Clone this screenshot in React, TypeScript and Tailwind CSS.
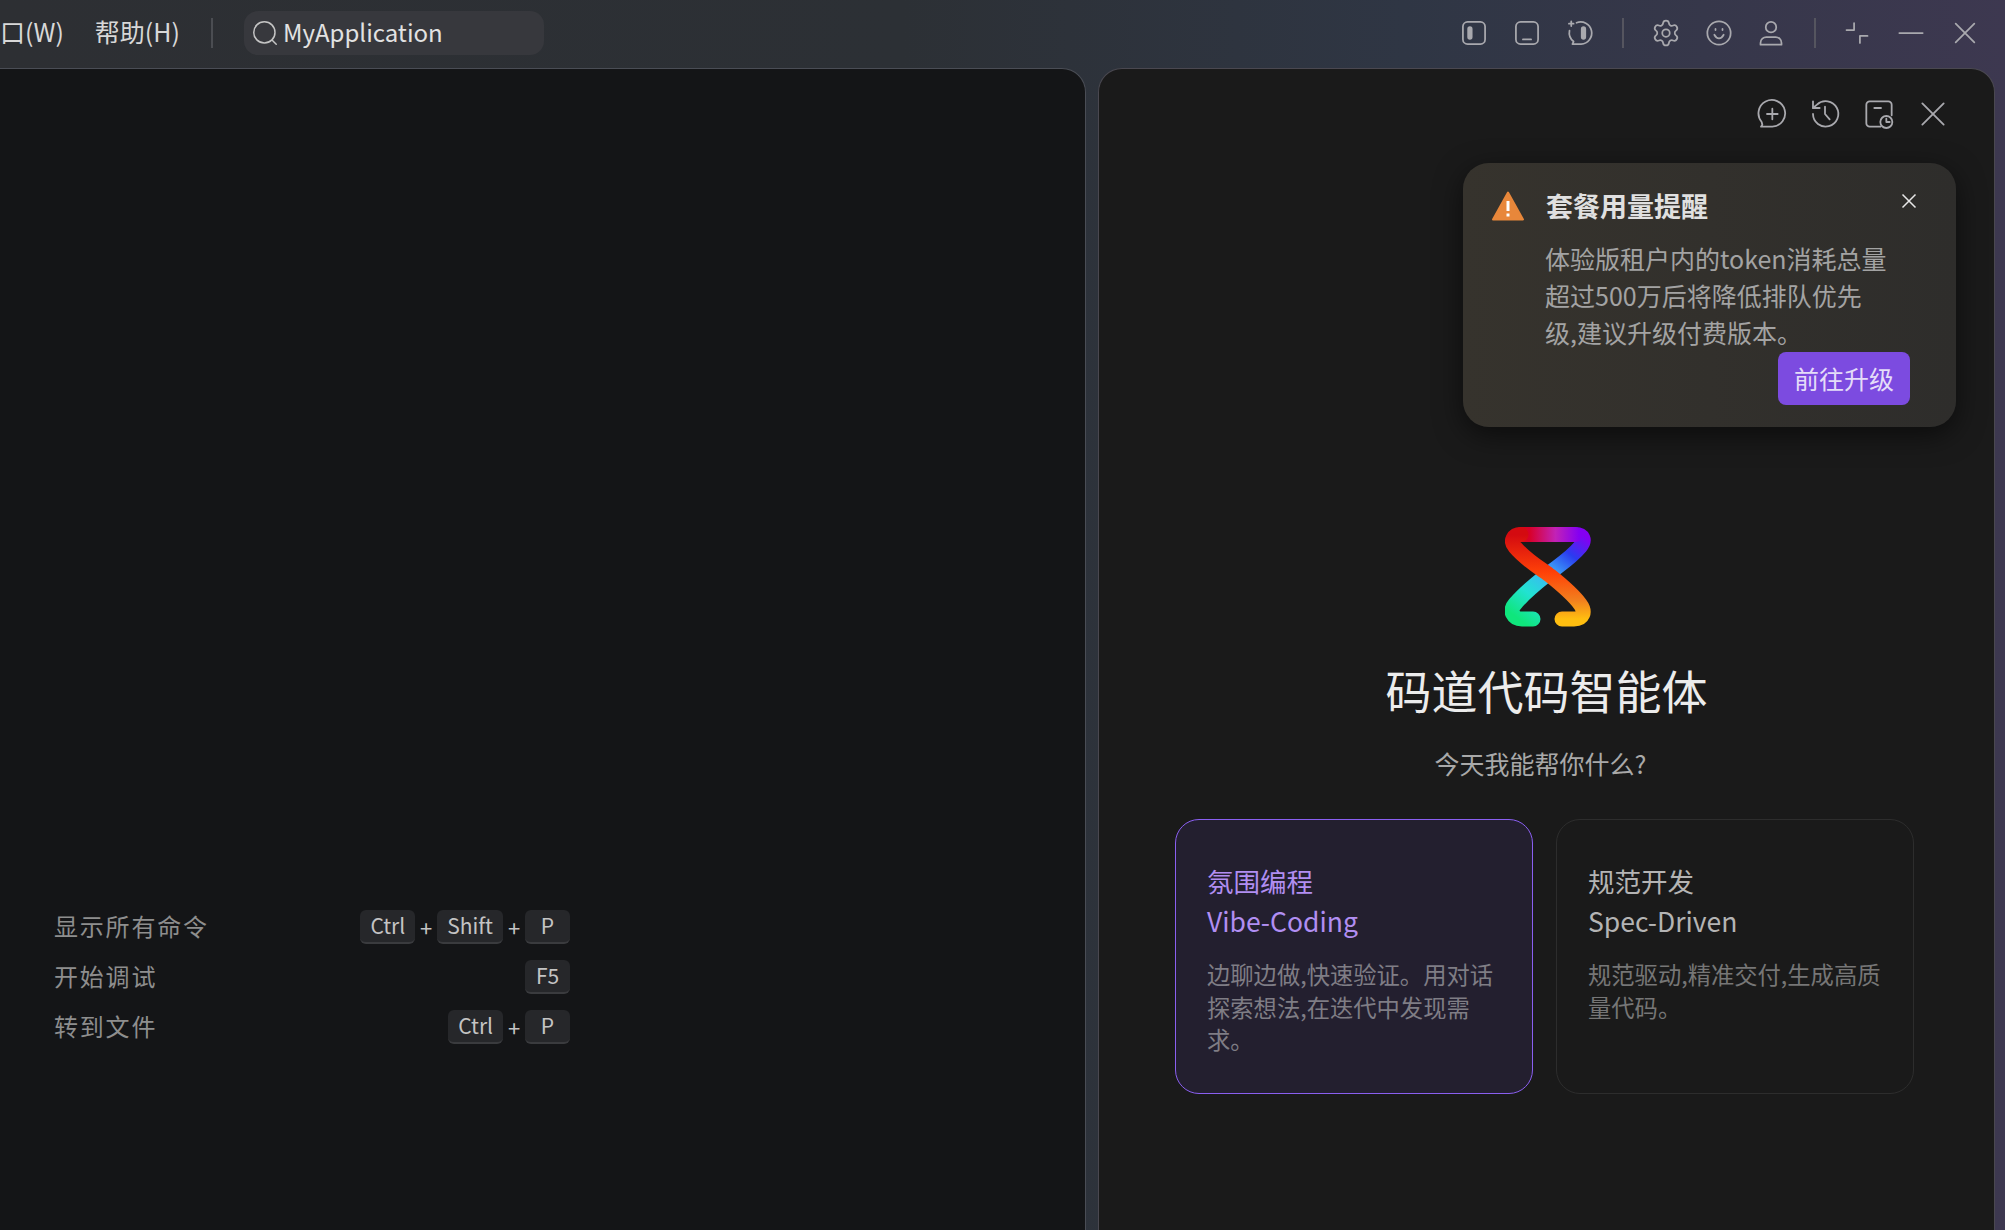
import type { ReactNode } from "react";
import { Settings } from "lucide-react";

const stroke = "#a9a9ae";

function Ico({ size = 28, children, color = stroke, sw = 1.5 }: { size?: number; children: ReactNode; color?: string; sw?: number }) {
  return (
    <svg width={size} height={size} viewBox="0 0 24 24" fill="none" stroke={color} strokeWidth={sw} strokeLinecap="round" strokeLinejoin="round" className="shrink-0">
      {children}
    </svg>
  );
}

function Logo() {
  return (
    <svg width="86" height="100" viewBox="0 0 86 100" fill="none" strokeWidth="15" strokeLinecap="round" strokeLinejoin="round" className="ml-[2px]">
      <defs>
        <linearGradient id="riseGrad" gradientUnits="userSpaceOnUse" x1="14" y1="92" x2="78" y2="8">
          <stop offset="0" stopColor="#0fe67c" />
          <stop offset="0.25" stopColor="#22e2d2" />
          <stop offset="0.52" stopColor="#3fb2f8" />
          <stop offset="0.78" stopColor="#2a3cf0" />
          <stop offset="1" stopColor="#8400f2" />
        </linearGradient>
        <linearGradient id="topGrad" gradientUnits="userSpaceOnUse" x1="74" y1="0" x2="12" y2="0">
          <stop offset="0" stopColor="#8400f2" />
          <stop offset="0.38" stopColor="#c222b6" />
          <stop offset="0.8" stopColor="#d80028" />
          <stop offset="1" stopColor="#d40a10" />
        </linearGradient>
        <linearGradient id="fallGrad" gradientUnits="userSpaceOnUse" x1="0" y1="8" x2="0" y2="92">
          <stop offset="0" stopColor="#d40a10" />
          <stop offset="0.45" stopColor="#ff4208" />
          <stop offset="0.78" stopColor="#f2801e" />
          <stop offset="1" stopColor="#ffbe10" />
        </linearGradient>
      </defs>
      <path d="M28 92H17C8 92 4 84 10 77C20 65 33 55 43 47C53 39 66 31 75 20C81 13 78 7.5 70 7.5" stroke="url(#riseGrad)" />
      <path d="M70 7.5H16" stroke="url(#topGrad)" />
      <path d="M16 7.5C8 7.5 5 14 10 20C20 32 33 40 43 47C53 55 66 65 75 77C81 85 78 92 69 92H57" stroke="url(#fallGrad)" />
    </svg>
  );
}

function Key({ children }: { children: ReactNode }) {
  return (
    <span className="flex h-[34px] min-w-[45px] items-center justify-center rounded-[6px] border-b-2 border-[#3a3b3e] bg-[#26272a] px-[10px] text-[21px] text-[#c4c4c4]">
      {children}
    </span>
  );
}

const Plus = () => <span className="w-[22px] text-center text-[22px] text-[#c4c4c4]">+</span>;

function ShortcutRow({ label, keys }: { label: string; keys: string[] }) {
  return (
    <div className="flex h-[50px] items-center justify-between">
      <span className="pb-[2px] text-[24px] tracking-[1.8px] text-[#8e8e8e]">{label}</span>
      <div className="flex items-center">
        {keys.map((k, i) => (
          <span key={k} className="flex items-center">
            {i > 0 && <Plus />}
            <Key>{k}</Key>
          </span>
        ))}
      </div>
    </div>
  );
}

function ModeCard({ active, title, sub, desc }: { active?: boolean; title: string; sub: string; desc: string }) {
  return (
    <div className={active ? "h-[275px] w-[358px] rounded-[24px] border-[1.5px] border-[#8a5ff0] bg-[#231f2f] px-[31px] pt-[41px]" : "h-[275px] w-[358px] rounded-[24px] border-[1.5px] border-[#2d2d2d] px-[31px] pt-[41px]"}>
      <div className={active ? "text-[26.5px] leading-[40px] text-[#b18ef2]" : "text-[26.5px] leading-[40px] text-[#b4b4b4]"}>
        <div>{title}</div>
        <div>{sub}</div>
      </div>
      <p className={active ? "mt-[17px] text-[23.3px] leading-[32.5px] text-[#7f7d85]" : "mt-[17px] text-[23.3px] leading-[32.5px] text-[#767676]"}>{desc}</p>
    </div>
  );
}

export default function App() {
  return (
    <div className="flex h-[1230px] w-[2005px] flex-col overflow-hidden bg-[linear-gradient(90deg,#2d2f33_0%,#2c3035_45%,#2f3644_70%,#3d3850_100%)] font-['Noto_Sans_CJK_SC','Noto_Sans',sans-serif]">
      {/* title bar */}
      <header className="flex h-[68px] shrink-0 items-center pb-[2px] pr-[26px]">
        <div className="flex items-center gap-[31px] pb-[3px] text-[25px] text-[#d8d8d8]">
          <span>口(W)</span>
          <span>帮助(H)</span>
        </div>
        <div className="ml-[31px] h-[30px] w-[2px] bg-[#4b4d52]" />
        <div className="ml-[31px] flex h-[44px] w-[300px] items-center gap-[3px] rounded-[14px] bg-[#37383d] pl-[6px] text-[24px] text-[#e2e2e2]">
          <Ico size={30} color="#c4c4c4" sw={1.2}>
            <circle cx="11.5" cy="11.5" r="8.5" />
            <path d="M18 18l3 3" />
          </Ico>
          <span className="pb-[2px]">MyApplication</span>
        </div>
        <div className="ml-auto flex items-center">
          <div className="flex items-center gap-[25px]">
            <Ico>
              <rect x="2.5" y="2.5" width="19" height="19" rx="4" />
              <rect x="7" y="7" width="3" height="10" rx="1.5" fill={stroke} />
            </Ico>
            <Ico>
              <rect x="2.5" y="2.5" width="19" height="19" rx="4" />
              <path d="M8.5 17.5h7" />
            </Ico>
            <Ico>
              <path d="M9 3.2A9.5 9.5 0 1 1 13 21.5H5.5l1-2.2A9.5 9.5 0 0 1 3 10" />
              <path d="M4.5 2v4M2.5 4h4" />
              <rect x="13.5" y="7" width="3" height="10" rx="1.5" fill={stroke} />
            </Ico>
          </div>
          <div className="ml-[28px] mr-[27px] h-[30px] w-[2px] bg-[#55555f]" />
          <div className="flex items-center gap-[24px]">
            <Settings size={30} color={stroke} strokeWidth={1.4} className="shrink-0" />
            <Ico>
              <circle cx="12" cy="12" r="10" />
              <path d="M8 13.5c1 2 2.5 3 4 3s3-1 4-3" />
              <path d="M9 8.5v1M15 8.5v1" />
            </Ico>
            <Ico>
              <circle cx="12" cy="7" r="4.5" />
              <path d="M3 22v-1.5c0-3 2.500-5 5-5h8c2.500 0 5 2 5 5V22Z" />
            </Ico>
          </div>
          <div className="ml-[29px] mr-[27px] h-[30px] w-[2px] bg-[#55555f]" />
          <div className="flex items-center gap-[26px]">
            <Ico>
              <path d="M9.5 3.500v6h-6.500" />
              <path d="M14.500 20.500v-6h6.500" />
            </Ico>
            <Ico>
              <path d="M2 12h20" />
            </Ico>
            <Ico>
              <path d="M4 4l16 16M20 4 4 20" />
            </Ico>
          </div>
        </div>
      </header>

      {/* panels */}
      <main className="flex h-[1190px] shrink-0 gap-[12px] pr-[10px]">
        <section className="flex w-[1086px] flex-col rounded-tr-[24px] border-r border-t border-[#4a4d55] bg-[#141517] pl-[54px] pt-[833px]">
          <div className="w-[516px]">
            <ShortcutRow label="显示所有命令" keys={["Ctrl", "Shift", "P"]} />
            <ShortcutRow label="开始调试" keys={["F5"]} />
            <ShortcutRow label="转到文件" keys={["Ctrl", "P"]} />
          </div>
        </section>

        <section className="relative flex flex-1 flex-col rounded-t-[24px] border-l border-r border-t border-[#4a4850] bg-[#1a1a1a]">
          <div className="flex items-center justify-end gap-[22px] pr-[45px] pt-[29px]">
            <Ico size={32} sw={1.35}>
              <path d="M5.5 20 4.500 21.500H13A10 10 0 1 0 5 18Z" />
              <path d="M13 8v8M9 12h8" />
            </Ico>
            <Ico size={32} sw={1.35}>
              <path d="M3 12a9.5 9.5 0 1 0 3-7L3 7.500" />
              <path d="M3 2.500v5h5" />
              <path d="M12 6.500V12l3.500 4" />
            </Ico>
            <Ico size={32} sw={1.35}>
              <path d="M13 21.500H5a2.500 2.500 0 0 1-2.500-2.500V5A2.500 2.500 0 0 1 5 2.500h14A2.500 2.500 0 0 1 21.500 5v8" />
              <path d="M8.500 7.500h5" />
              <circle cx="17.500" cy="18" r="4.500" />
              <path d="M17.500 15.500V18h2.500" />
            </Ico>
            <Ico size={32} sw={1.35}>
              <path d="M4 4l16 16M20 4 4 20" />
            </Ico>
          </div>

          {/* usage notice */}
          <div className="absolute right-[38px] top-[94px] h-[264px] w-[493px] rounded-[26px] bg-[linear-gradient(90deg,#36332d,#2e2d2b)] pl-[29px] pr-[46px] pt-[21px] shadow-[0_8px_28px_rgba(0,0,0,0.55)]">
            <div className="flex h-[44px] items-center">
              <svg width="32" height="30" viewBox="0 0 32 30" className="shrink-0">
                <path d="M16 1.500 31 28.500H1Z" fill="#e8873a" stroke="#e8873a" strokeWidth="2" strokeLinejoin="round" />
                <path d="M16 10v10" stroke="#fff" strokeWidth="3" />
                <path d="M16 22.500v3" stroke="#fff" strokeWidth="3" />
              </svg>
              <span className="ml-[22px] text-[27px] font-bold text-[#e0e0e0]">套餐用量提醒</span>
              <svg width="16" height="16" viewBox="0 0 16 16" className="ml-auto -mt-[10px] mr-[-7px]" stroke="#e8e8e8" strokeWidth="1.5">
                <path d="M1.500 1.500l13 13M14.500 1.500l-13 13" />
              </svg>
            </div>
            <p className="ml-[53px] mt-[12px] w-[344px] text-[25px] leading-[37px] text-[#a3a3a3]">体验版租户内的token消耗总量超过500万后将降低排队优先级,建议升级付费版本。</p>
            <div className="flex justify-end">
              <button className="mt-[1px] flex h-[53px] w-[132px] items-center justify-center rounded-[8px] bg-[#7c4be0] text-[25px] text-[#e4dcf8]">前往升级</button>
            </div>
          </div>

          <div className="mt-[397px] flex flex-col items-center">
            <Logo />
            <h1 className="mt-[27px] text-[46px] font-normal leading-[70px] text-[#ececec]">码道代码智能体</h1>
            <p className="mt-[21px] pr-[12px] text-[25px] leading-[36px] text-[#a9a9a9]">今天我能帮你什么?</p>
          </div>
          <div className="ml-[76px] mt-[38px] flex gap-[23px]">
            <ModeCard active title="氛围编程" sub="Vibe-Coding" desc="边聊边做,快速验证。用对话探索想法,在迭代中发现需求。" />
            <ModeCard title="规范开发" sub="Spec-Driven" desc="规范驱动,精准交付,生成高质量代码。" />
          </div>
        </section>
      </main>
    </div>
  );
}
